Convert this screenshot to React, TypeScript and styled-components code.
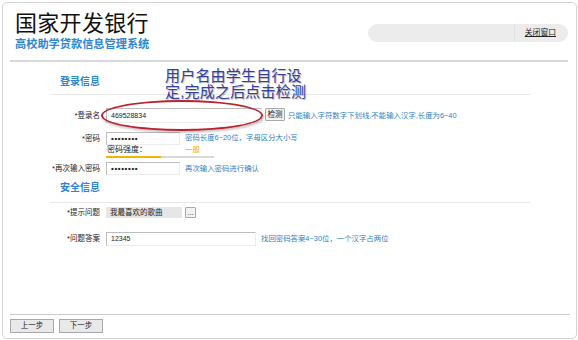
import React from 'react';
import styled, { createGlobalStyle } from 'styled-components';

const GlobalStyle = createGlobalStyle`
    html, body {
        margin: 0;
        padding: 0;
        background: #ffffff;
    }
    body {
        font-family: "Liberation Sans", "Noto Sans CJK SC", sans-serif;
        color: #222;
    }
`;

const Frame = styled.div`
    box-sizing: border-box;
    margin: 2px 1px 0 2px;
    height: 337px;
    border: 1px solid #d4d4d4;
    border-radius: 5px;
    display: flex;
    flex-direction: column;
    overflow: hidden;
`;

const Header = styled.header`
    box-sizing: border-box;
    height: 59px;
    margin: 0 8px 0 7px;
    padding: 8px 0 0 5px;
    display: flex;
    justify-content: space-between;
    align-items: flex-start;
    border-bottom: 2px solid #d9d9d9;
`;

const Brand = styled.div`
    display: flex;
    flex-direction: column;
`;

const Title = styled.h1`
    margin: 0;
    font-size: 22px;
    line-height: 26px;
    font-weight: 400;
    color: #111;
    letter-spacing: 0.3px;
`;

const Subtitle = styled.div`
    font-size: 11.2px;
    line-height: 14px;
    font-weight: 700;
    color: #2b87cf;
`;

const Pill = styled.div`
    margin-top: 13px;
    width: 200px;
    height: 18px;
    border-radius: 9px;
    background: #ececec;
    display: flex;
    justify-content: flex-end;
    align-items: center;
`;

const CloseLink = styled.a`
    height: 18px;
    padding: 0 12px 0 10px;
    border-left: 1px solid #e2e2e2;
    font-size: 7.8px;
    line-height: 18px;
    color: #222;
    text-decoration: underline;
    cursor: pointer;
`;

const Main = styled.main`
    position: relative;
    flex: 1;
    display: flex;
    flex-direction: column;
`;

const SectionHeading = styled.h2<{ $top: number; $pad: number }>`
    box-sizing: border-box;
    margin: ${(p) => p.$top}px 0 0 47px;
    width: 480px;
    padding: 0 0 ${(p) => p.$pad}px 10px;
    border-bottom: 1px solid #e8e8e8;
    font-size: 10px;
    line-height: 16px;
    font-weight: 700;
    color: #2b87cf;
`;

const Row = styled.div<{ $top: number }>`
    margin-top: ${(p) => p.$top}px;
    display: flex;
    align-items: flex-start;
`;

const Label = styled.div<{ $h: number }>`
    width: 97px;
    text-align: right;
    font-size: 7.5px;
    line-height: ${(p) => p.$h}px;
    color: #222;
    margin-right: 6px;
    white-space: nowrap;
`;

const Field = styled.div<{ $w: number; $h: number }>`
    box-sizing: border-box;
    width: ${(p) => p.$w}px;
    height: ${(p) => p.$h}px;
    border: 1px solid;
    border-color: #bdbdbd #ececec #ececec #bdbdbd;
    background: #fff;
    padding-left: 4px;
    font-size: 7px;
    line-height: ${(p) => p.$h - 2}px;
    color: #222;
`;

const Dots = styled.span`
    font-size: 8px;
    font-weight: 700;
    letter-spacing: 0.6px;
`;

const Select = styled.div`
    box-sizing: border-box;
    width: 76px;
    height: 11px;
    background: #e6e6e6;
    padding-left: 4px;
    font-size: 7.5px;
    line-height: 11px;
`;

const SmallButton = styled.button<{ $w: number; $h?: number }>`
    box-sizing: border-box;
    width: ${(p) => p.$w}px;
    height: ${(p) => p.$h ?? 13}px;
    padding: 0;
    border: 1px solid #a9a9a9;
    border-radius: 1px;
    background: #f2f2f2;
    font-family: inherit;
    font-size: 7.5px;
    line-height: ${(p) => (p.$h ?? 13) - 3}px;
    color: #222;
`;

const Hint = styled.div<{ $h: number; $color?: string }>`
    font-size: 7.4px;
    line-height: ${(p) => p.$h}px;
    color: ${(p) => p.$color ?? '#2e7fc4'};
    white-space: nowrap;
`;

const Stack = styled.div<{ $w?: number }>`
    display: flex;
    flex-direction: column;
    ${(p) => (p.$w ? `width: ${p.$w}px;` : '')}
`;

const Inline = styled.div<{ $gap: number }>`
    display: flex;
    align-items: flex-start;
    gap: ${(p) => p.$gap}px;
`;

const StrengthText = styled.div`
    font-size: 8px;
    line-height: 10px;
    color: #222;
    padding-left: 1px;
    white-space: nowrap;
`;

const StrengthBar = styled.div`
    margin-top: 1px;
    width: 108px;
    height: 2px;
    background: #d9d9d9;
`;

const StrengthFill = styled.div`
    height: 100%;
    background: #f5b400;
`;

const Annotation = styled.div`
    position: absolute;
    left: 162px;
    top: 6px;
    font-size: 15px;
    line-height: 16px;
    color: #34409c;
    letter-spacing: 0.2px;
    text-shadow: 1px 1px 1px rgba(0, 0, 0, 0.3);
    pointer-events: none;
`;

const Ring = styled.div`
    position: absolute;
    left: 98px;
    top: 38px;
    width: 162px;
    height: 31px;
    box-sizing: border-box;
    border: 2px solid #b9232f;
    border-radius: 50%;
    box-shadow: 1px 2px 2px rgba(0, 0, 0, 0.2);
    pointer-events: none;
`;

const Footer = styled.footer`
    margin: auto 6px 0 7px;
    padding: 4px 0 5px;
    border-top: 1px solid #cacaca;
    display: flex;
    gap: 5px;
`;

const NavButton = styled.button`
    box-sizing: border-box;
    width: 44px;
    height: 14px;
    padding: 0;
    border: 1px solid #a8a8a8;
    background: #e9e9e9;
    font-family: inherit;
    font-size: 7.5px;
    line-height: 12px;
    color: #222;
`;

export default function App() {
    const strength = 55;
    return (
        <>
            <GlobalStyle />
            <Frame>
                <Header>
                    <Brand>
                        <Title>国家开发银行</Title>
                        <Subtitle>高校助学贷款信息管理系统</Subtitle>
                    </Brand>
                    <Pill>
                        <CloseLink>关闭窗口</CloseLink>
                    </Pill>
                </Header>

                <Main>
                    <SectionHeading $top={12} $pad={4}>登录信息</SectionHeading>

                    <Row $top={13}>
                        <Label $h={15}>*登录名</Label>
                        <Inline $gap={3}>
                            <Field $w={156} $h={15}>469528834</Field>
                            <SmallButton $w={20}>检测</SmallButton>
                            <Hint $h={15}>只能输入字符数字下划线,不能输入汉字,长度为6~40</Hint>
                        </Inline>
                    </Row>

                    <Row $top={9}>
                        <Label $h={13}>*密码</Label>
                        <Inline $gap={5}>
                            <Stack $w={74}>
                                <Field $w={74} $h={13}>
                                    <Dots>••••••••</Dots>
                                </Field>
                                <StrengthText>密码强度：</StrengthText>
                                <StrengthBar>
                                    <StrengthFill style={{ width: `${strength}px` }} />
                                </StrengthBar>
                            </Stack>
                            <Stack>
                                <Hint $h={12}>密码长度6~20位，字母区分大小写</Hint>
                                <Hint $h={11} $color="#f0a000">一般</Hint>
                            </Stack>
                        </Inline>
                    </Row>

                    <Row $top={4}>
                        <Label $h={13}>*再次输入密码</Label>
                        <Inline $gap={5}>
                            <Field $w={74} $h={13}>
                                <Dots>••••••••</Dots>
                            </Field>
                            <Hint $h={13}>再次输入密码进行确认</Hint>
                        </Inline>
                    </Row>

                    <SectionHeading $top={5} $pad={6}>安全信息</SectionHeading>

                    <Row $top={4}>
                        <Label $h={11}>*提示问题</Label>
                        <Inline $gap={3}>
                            <Select>我最喜欢的歌曲</Select>
                            <SmallButton $w={11} $h={11}>...</SmallButton>
                        </Inline>
                    </Row>

                    <Row $top={14}>
                        <Label $h={14}>*问题答案</Label>
                        <Inline $gap={5}>
                            <Field $w={150} $h={14}>12345</Field>
                            <Hint $h={14}>找回密码答案4~30位，一个汉字占两位</Hint>
                        </Inline>
                    </Row>

                    <Annotation>
                        用户名由学生自行设
                        <br />
                        定,完成之后点击检测
                    </Annotation>
                    <Ring />

                    <Footer>
                        <NavButton>上一步</NavButton>
                        <NavButton>下一步</NavButton>
                    </Footer>
                </Main>
            </Frame>
        </>
    );
}
